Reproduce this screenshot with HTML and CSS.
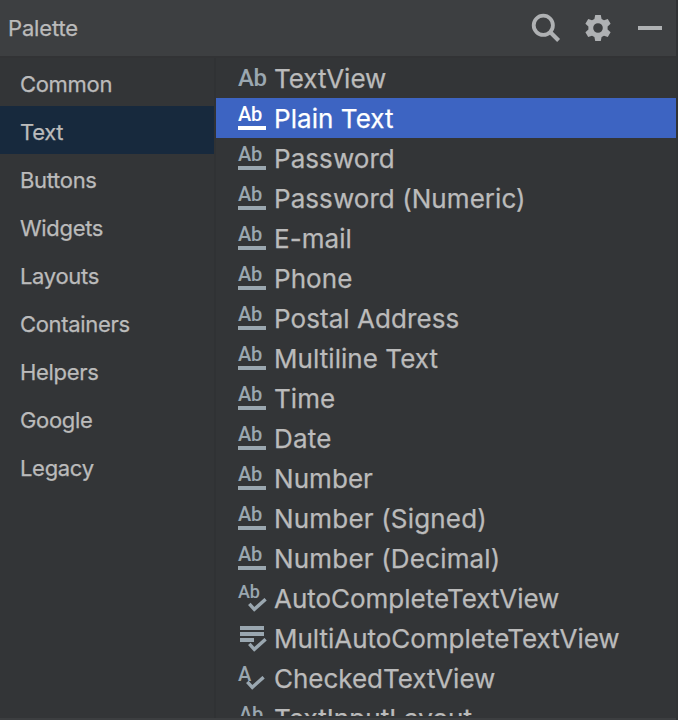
FILE: index.html
```
<!DOCTYPE html>
<html lang="en">
<head>
<meta charset="utf-8">
<title>Palette</title>
<link rel="stylesheet" href="styles.css">
</head>
<body>
<svg class="defs" aria-hidden="true">
  <symbol id="check" viewBox="0 0 19 14"><path d="M1.300 5.800 6.300 11.300 17.600 1.200" fill="none" stroke="currentColor" stroke-width="3.4"/></symbol>
</svg>
<div class="panel">
  <header class="header">
    <h1 class="title">Palette</h1>
    <div class="tools">
      <svg class="tool" viewBox="0 0 32 32"><circle cx="13.3" cy="13.3" r="9.6" fill="none" stroke="currentColor" stroke-width="3.8"/><path d="M19.6 19.6 28.6 28.6" stroke="currentColor" stroke-width="4.2"/></svg>
      <svg class="tool" viewBox="0 0 32 32"><path fill="currentColor" fill-rule="evenodd" d="M13.2 3h5.6l.8 3.9 2.4 1.4 3.8-1.3 2.8 4.8-3 2.7v3l3 2.7-2.8 4.8-3.8-1.3-2.4 1.4-.8 3.9h-5.6l-.8-3.9-2.4-1.4L6.2 25l-2.8-4.8 3-2.7v-3l-3-2.7L6.2 7 10 8.300l2.400-1.400zM16 11.200a4.800 4.800 0 1 0 0 9.600a4.800 4.800 0 1 0 0-9.600z"/></svg>
      <svg class="tool" viewBox="0 0 32 32"><path fill="currentColor" d="M4 14h24v4H4z"/></svg>
    </div>
  </header>
  <div class="content">
    <nav class="categories">
      <div class="category">Common</div>
      <div class="category active">Text</div>
      <div class="category">Buttons</div>
      <div class="category">Widgets</div>
      <div class="category">Layouts</div>
      <div class="category">Containers</div>
      <div class="category">Helpers</div>
      <div class="category">Google</div>
      <div class="category">Legacy</div>
    </nav>
    <div class="items">
      <div class="item compact"><span class="icon large">Ab</span><span>TextView</span></div>
      <div class="item selected"><span class="icon field">Ab</span><span>Plain Text</span></div>
      <div class="item"><span class="icon field">Ab</span><span>Password</span></div>
      <div class="item"><span class="icon field">Ab</span><span>Password (Numeric)</span></div>
      <div class="item"><span class="icon field">Ab</span><span>E-mail</span></div>
      <div class="item"><span class="icon field">Ab</span><span>Phone</span></div>
      <div class="item"><span class="icon field">Ab</span><span>Postal Address</span></div>
      <div class="item"><span class="icon field">Ab</span><span>Multiline Text</span></div>
      <div class="item"><span class="icon field">Ab</span><span>Time</span></div>
      <div class="item wide"><span class="icon field">Ab</span><span>Date</span></div>
      <div class="item"><span class="icon field">Ab</span><span>Number</span></div>
      <div class="item wide"><span class="icon field">Ab</span><span>Number (Signed)</span></div>
      <div class="item wide"><span class="icon field">Ab</span><span>Number (Decimal)</span></div>
      <div class="item compact"><span class="icon checked">Ab<svg class="check"><use href="#check"/></svg></span><span>AutoCompleteTextView</span></div>
      <div class="item compact"><span class="icon"><svg class="bars" viewBox="0 0 24 16"><path fill="currentColor" d="M0 0h24v4H0zM0 6h24v4H0zM0 12h14v4H0z"/></svg><svg class="check"><use href="#check"/></svg></span><span>MultiAutoCompleteTextView</span></div>
      <div class="item compact"><span class="icon single">A<svg class="check"><use href="#check"/></svg></span><span>CheckedTextView</span></div>
      <div class="item"><span class="icon field inset">Ab</span><span>TextInputLayout</span></div>
    </div>
  </div>
</div>
</body>
</html>
```
FILE: styles.css
```
* { box-sizing: border-box; }
body {
  margin: 0;
  background: #313335;
  color: #bbbbbb;
  font-family: Inter, "Liberation Sans", sans-serif;
  -webkit-text-stroke: 0.25px currentColor;
}
.defs { position: absolute; width: 0; height: 0; }
.panel {
  width: 676px;
  height: 720px;
  display: flex;
  flex-direction: column;
  border-bottom: 2px solid #3c3e40;
}
.header {
  flex: none;
  height: 58px;
  padding: 0 10px 2px 8px;
  display: flex;
  align-items: center;
  justify-content: space-between;
  background: #3d3f41;
  border-bottom: 2px solid #323335;
}
.title { margin: 2px 0 0; font-size: 22px; font-weight: 400; line-height: 28px; letter-spacing: -0.15px; }
.tools { display: flex; gap: 20px; color: #afb1b3; margin-top: 2px; }
.tool { width: 32px; height: 32px; display: block; }
.content { flex: 1; min-height: 0; display: flex; background: #333537; }
.categories { width: 216px; flex: none; border-right: 2px solid #303234; }
.category {
  height: 48px;
  padding: 2px 0 0 20px;
  line-height: 48px;
  font-size: 22px;
  letter-spacing: -0.32px;
}
.active { background: #17293d; }
.items { flex: 1; overflow: hidden; margin-bottom: 2px; }
.item {
  height: 40px;
  padding-left: 22px;
  display: flex;
  gap: 8px;
  font-size: 26px;
  line-height: 42px;
  letter-spacing: 0.06px;
  white-space: nowrap;
}
.compact { letter-spacing: -0.02px; }
.wide { letter-spacing: 0.18px; }
.icon {
  position: relative;
  flex: none;
  width: 28px;
  height: 40px;
  color: #9aa7b0;
  font: 500 20px/32px Roboto, sans-serif;
  letter-spacing: -0.2px;
  -webkit-text-stroke: 0;
}
.large { font-size: 24px; line-height: 40px; letter-spacing: -0.5px; }
.field::after {
  content: "";
  position: absolute;
  left: 0;
  top: 28px;
  width: 28px;
  height: 4px;
  background: currentColor;
}
.inset { left: 1px; }
.selected { background: #3d64c2; color: #ffffff; }
.selected .icon { color: #ffffff; }
.checked { font-size: 18px; line-height: 27px; }
.check { position: absolute; left: 10px; top: 20px; width: 19px; height: 14px; }
.bars { position: absolute; left: 2px; top: 8px; width: 24px; height: 16px; }
.single .check { left: 8px; top: 18px; }
```
